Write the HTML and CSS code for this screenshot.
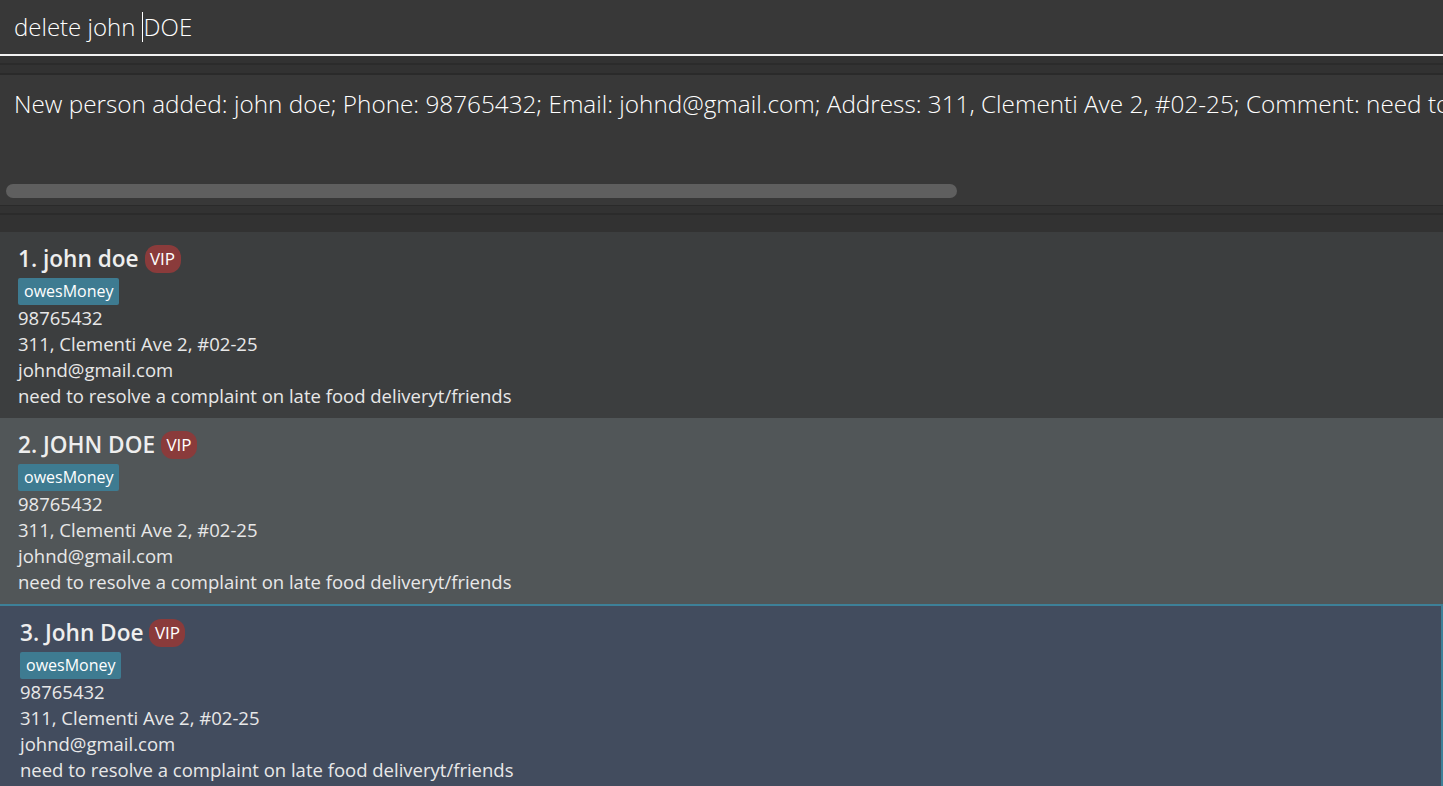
FILE: index.html
```html
<!DOCTYPE html>
<html>
<head>
<meta charset="utf-8">
<link rel="stylesheet" href="styles.css">
</head>
<body>
<div class="app">
  <div class="command"><span>delete john </span><span class="caret"></span><span>DOE</span></div>
  <div class="sep sep-top"></div>
  <div class="result">
    <div class="result-text">New person added: john doe; Phone: 98765432; Email: johnd@gmail.com; Address: 311, Clementi Ave 2, #02-25; Comment: need to resolve a complaint on late food deliveryt/friends</div>
    <div class="hscroll"><div class="thumb"></div></div>
  </div>
  <div class="sep sep-bottom"></div>
  <div class="list">
    <div class="card card-odd">
      <div class="name-row"><span class="name">1. john doe</span><span class="vip">VIP</span></div>
      <div class="tags"><span class="tag">owesMoney</span></div>
      <div class="line">98765432</div>
      <div class="line">311, Clementi Ave 2, #02-25</div>
      <div class="line">johnd@gmail.com</div>
      <div class="line">need to resolve a complaint on late food deliveryt/friends</div>
    </div>
    <div class="card card-even">
      <div class="name-row"><span class="name">2. JOHN DOE</span><span class="vip">VIP</span></div>
      <div class="tags"><span class="tag">owesMoney</span></div>
      <div class="line">98765432</div>
      <div class="line">311, Clementi Ave 2, #02-25</div>
      <div class="line">johnd@gmail.com</div>
      <div class="line">need to resolve a complaint on late food deliveryt/friends</div>
    </div>
    <div class="card card-selected">
      <div class="name-row"><span class="name">3. John Doe</span><span class="vip">VIP</span></div>
      <div class="tags"><span class="tag">owesMoney</span></div>
      <div class="line">98765432</div>
      <div class="line">311, Clementi Ave 2, #02-25</div>
      <div class="line">johnd@gmail.com</div>
      <div class="line">need to resolve a complaint on late food deliveryt/friends</div>
    </div>
  </div>
</div>
</body>
</html>
```

FILE: styles.css
```css
html, body {
  margin: 0;
  padding: 0;
  background: #333333;
  overflow: hidden;
}
body {
  font-family: "Open Sans", "Noto Sans", sans-serif;
  width: 1443px;
  height: 786px;
}
.app {
  display: flex;
  flex-direction: column;
  height: 786px;
}
.command {
  box-sizing: border-box;
  background: #383838;
  border-bottom: 2px solid #f2f2f2;
  display: flex;
  align-items: center;
  padding-left: 14px;
  padding-bottom: 1px;
  font-size: 24px;
  font-weight: 300;
  color: #ffffff;
  white-space: pre;
  flex-shrink: 0;
  height: 56px;
}
.caret {
  display: inline-block;
  width: 1px;
  height: 30px;
  background: #ffffff;
  margin-right: 1px;
}
.sep {
  flex-shrink: 0;
  background: #323232;
}
.sep-top {
  height: 19px;
  box-sizing: border-box;
  border-bottom: 2px solid #2a2a2a;
}
.sep-top::after {
  content: "";
  display: block;
  margin-top: 7px;
  height: 2px;
  background: #2b2b2b;
}
.result {
  height: 130px;
  background: #383838;
  box-sizing: border-box;
  padding-top: 12px;
  flex-shrink: 0;
  display: flex;
  flex-direction: column;
  overflow: hidden;
}
.result-text {
  padding-left: 14px;
  font-size: 24.3px;
  font-weight: 300;
  color: #ffffff;
  white-space: nowrap;
  line-height: 34px;
}
.hscroll {
  margin-top: auto;
  margin-bottom: 7px;
  padding-left: 6px;
}
.thumb {
  width: 951px;
  height: 14px;
  border-radius: 7px;
  background: #5f5f5f;
}
.sep-bottom {
  height: 27px;
  box-sizing: border-box;
  border-top: 1px solid #2a2a2a;
}
.sep-bottom::after {
  content: "";
  display: block;
  margin-top: 7px;
  height: 2px;
  background: #2b2b2b;
}
.list {
  flex: 1;
  display: flex;
  flex-direction: column;
  overflow: hidden;
}
.card {
  height: 186px;
  flex-shrink: 0;
  box-sizing: border-box;
  padding: 12px 0 0 18px;
  color: #e8e8e8;
  font-size: 18.5px;
}
.card-odd { background: #3c3e3f; }
.card-even { background: #515658; }
.card-selected {
  background: #424c5e;
  border-top: 2px solid #3d8098;
  border-right: 2px solid #3d8098;
  padding-top: 12px;
  padding-left: 20px;
}
.name-row {
  display: flex;
  align-items: center;
  height: 29px;
  gap: 6px;
}
.name {
  font-size: 22.6px;
  font-weight: 600;
  color: #eeeeee;
}
.vip {
  background: #8a3b3b;
  color: #ffffff;
  border-radius: 12px;
  height: 28px;
  width: 36px;
  display: flex;
  align-items: center;
  justify-content: center;
  font-size: 17px;
}
.tags {
  margin-top: 5px;
  display: flex;
}
.tag {
  background: #3e7b91;
  color: #ffffff;
  font-size: 16px;
  height: 27px;
  line-height: 27px;
  padding: 0 6px;
  border-radius: 2px;
}
.line {
  line-height: 26px;
  white-space: nowrap;
}
```
